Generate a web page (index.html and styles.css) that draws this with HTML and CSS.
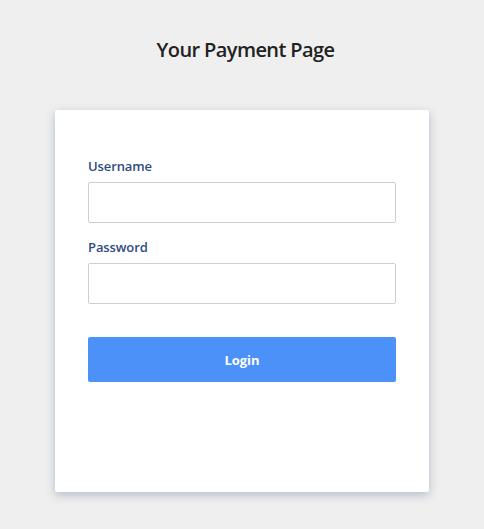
FILE: index.html
```html
<!DOCTYPE html>
<html lang="en">
<head>
    <meta charset="UTF-8">
    <meta name="viewport" content="width=device-width, initial-scale=1.0">
    <title>Your Payment Page</title>
    <link rel="stylesheet" href="styles.css">
</head>
<body>
    <h1 class="page-title">Your Payment Page</h1>
    <div class="login-card">
        <form class="login-form">
            <label class="field-label" for="username">Username</label>
            <input class="field-input" type="text" id="username">
            <label class="field-label" for="password">Password</label>
            <input class="field-input" type="password" id="password">
            <button class="login-button" type="button">Login</button>
        </form>
    </div>
</body>
</html>
```

FILE: styles.css
```css
body {
    margin: 0;
    height: 100vh;
    background-color: #efefef;
    font-family: "Open Sans", Arial, sans-serif;
    display: flex;
    flex-direction: column;
    align-items: center;
}

.page-title {
    margin: 36px 0 0 7px;
    font-size: 20px;
    line-height: 28px;
    font-weight: 600;
    color: #222;
    letter-spacing: -0.6px;
}

.login-card {
    margin-top: 46px;
    width: 374px;
    height: 382px;
    box-sizing: border-box;
    padding: 47px 33px 0;
    background: #fff;
    border-radius: 2px;
    box-shadow: 0 3px 10px rgba(70, 95, 130, 0.35);
}

.login-form {
    display: flex;
    flex-direction: column;
}

.field-label {
    font-size: 13px;
    line-height: 18px;
    font-weight: 600;
    color: #2f4b7f;
    letter-spacing: -0.1px;
}

.field-input {
    margin: 7px 0 15px;
    height: 41px;
    box-sizing: border-box;
    border: 1px solid #cfcfcf;
    border-radius: 2px;
    background: #fff;
}

.login-button {
    margin-top: 18px;
    height: 45px;
    border: none;
    border-radius: 2px;
    background: #4b91f7;
    color: #fff;
    font-family: inherit;
    font-size: 13px;
    font-weight: 700;
}
```
